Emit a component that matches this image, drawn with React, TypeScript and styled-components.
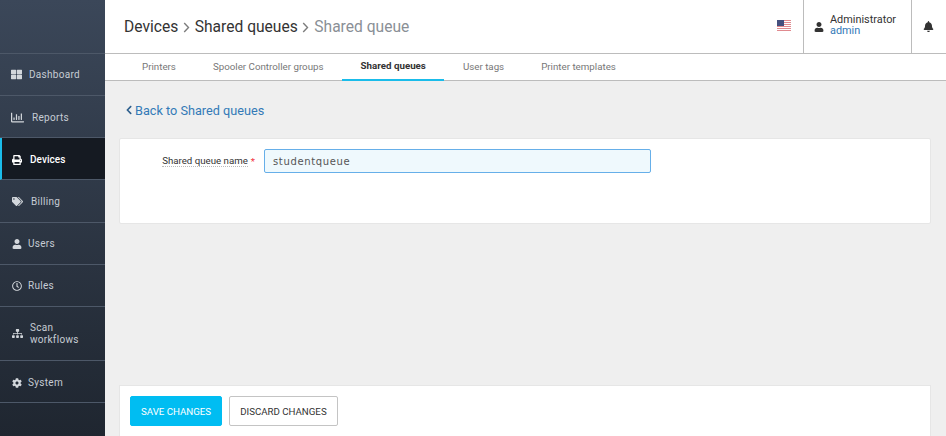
import React from 'react';
import styled, { createGlobalStyle } from 'styled-components';
import { FaThLarge, FaRegChartBar, FaPrint, FaTags, FaUser, FaRegClock, FaSitemap, FaCog, FaBell, FaChevronLeft } from 'react-icons/fa';

const Global = createGlobalStyle`
  html, body { margin: 0; padding: 0; height: 100%; overflow: hidden; }
  body { font-family: Roboto, "Liberation Sans", sans-serif; background: #efefef; }
  #root { height: 100%; }
  * { box-sizing: border-box; }
`;

const Page = styled.div`
  display: flex;
  width: 946px;
  height: 436px;
  overflow: hidden;
`;

const Sidebar = styled.nav`
  width: 105px;
  flex: none;
  display: flex;
  flex-direction: column;
  background: linear-gradient(180deg, #3b4759 0%, #1f2630 100%);
`;

const LogoArea = styled.div`
  height: 54px;
  flex: none;
  border-bottom: 1px solid #4d5868;
`;

const NavItem = styled.a<{ $active?: boolean; $h?: number; $gap: number; $pad: number; $nudge: number }>`
  display: flex;
  align-items: center;
  height: ${p => p.$h ?? 42}px;
  flex: none;
  padding-left: ${p => (p.$active ? p.$pad - 2 : p.$pad)}px;
  padding-top: ${p => p.$nudge}px;
  gap: ${p => p.$gap}px;
  border-bottom: 1px solid #4d5868;
  border-left: ${p => (p.$active ? '2px solid #1abcea' : 'none')};
  background: ${p => (p.$active ? '#151a22' : 'transparent')};
  color: ${p => (p.$active ? '#ffffff' : '#c6ccd4')};
  font-size: 10px;
  font-weight: ${p => (p.$active ? 500 : 400)};
  letter-spacing: ${p => (p.$active ? 0.05 : 0.3)}px;
  line-height: 12px;
  svg { flex: none; color: ${p => (p.$active ? '#ffffff' : '#d3d7dc')}; }
`;

const Main = styled.div`
  flex: 1;
  min-width: 0;
  display: flex;
  flex-direction: column;
`;

const Header = styled.header`
  height: 54px;
  flex: none;
  display: flex;
  align-items: stretch;
  justify-content: space-between;
  background: #fff;
  border-bottom: 1px solid #bcbcbc;
`;

const Crumbs = styled.div`
  display: flex;
  align-items: center;
  padding-left: 19px;
  font-size: 15.6px;
  color: #333;
`;

const Sep = styled.svg`
  width: 7px;
  height: 11px;
  margin: 2px 5px 0 4.5px;
  fill: none;
  stroke: #7d7d7d;
  stroke-width: 1.4;
`;

const Current = styled.span`
  color: #8a8f96;
`;

const HeaderRight = styled.div`
  display: flex;
  align-items: stretch;
`;

const FlagCell = styled.div`
  width: 43px;
  display: flex;
  align-items: center;
  padding-left: 17px;
  padding-bottom: 2px;
`;

const UserCell = styled.div`
  width: 109px;
  display: flex;
  align-items: center;
  gap: 6px;
  padding-left: 10px;
  border-left: 1px solid #bcbcbc;
  border-right: 1px solid #bcbcbc;
  color: #333;
  svg { color: #333; }
`;

const UserText = styled.div`
  font-size: 10.9px;
  line-height: 11px;
  margin-top: -3px;
`;

const UserRole = styled.div`
  color: #337ab7;
`;

const BellCell = styled.div`
  width: 34px;
  display: flex;
  align-items: center;
  padding-left: 11px;
  color: #333;
`;

const Tabs = styled.div`
  height: 27px;
  flex: none;
  display: flex;
  padding-left: 18.5px;
  background: #fff;
  border-bottom: 1px solid #bcbcbc;
`;

const Tab = styled.a<{ $active?: boolean }>`
  height: 27px;
  padding: 0 18.5px 2px;
  display: flex;
  align-items: center;
  font-size: 9.75px;
  white-space: nowrap;
  font-weight: ${p => (p.$active ? 700 : 400)};
  color: ${p => (p.$active ? '#333' : '#777')};
  border-bottom: ${p => (p.$active ? '2px solid #1abcea' : 'none')};
`;

const Body = styled.div`
  flex: 1;
  min-height: 0;
  display: flex;
  flex-direction: column;
  padding: 21px 15px 0 14px;
`;

const BackLink = styled.a`
  display: flex;
  align-items: center;
  gap: 1px;
  height: 16px;
  padding-left: 5px;
  font-size: 12.7px;
  color: #337ab7;
  svg { color: #2d5f8d; }
`;

const FormCard = styled.section`
  margin-top: 20px;
  height: 86px;
  flex: none;
  background: #fff;
  border: 1px solid #e6e6e6;
  border-radius: 2px;
  padding-top: 10px;
  display: flex;
  align-items: flex-start;
`;

const Label = styled.label`
  width: 135px;
  height: 24px;
  flex: none;
  display: flex;
  align-items: center;
  justify-content: flex-end;
  gap: 3px;
  margin-right: 9px;
  font-size: 9.7px;
  color: #333;
`;

const LabelText = styled.span`
  border-bottom: 1px dotted #bbb;
`;

const Required = styled.span`
  color: #f2333f;
`;

const NameInput = styled.input`
  width: 387px;
  height: 24px;
  padding: 0 8px;
  border: 1px solid #66afe9;
  border-radius: 2px;
  background: #eff9fd;
  outline: none;
  font-family: "DejaVu Sans", sans-serif;
  font-size: 10px;
  letter-spacing: 0.65px;
  color: #555;
`;

const Spacer = styled.div`
  flex: 1;
`;

const FooterCard = styled.section`
  height: 51px;
  flex: none;
  background: #fff;
  border: 1px solid #e6e6e6;
  border-bottom: none;
  padding: 10px;
  display: flex;
  gap: 7px;
  align-items: flex-start;
`;

const Button = styled.button<{ $primary?: boolean }>`
  height: 30px;
  padding: 0 10px;
  border-radius: 2px;
  font-family: Roboto, "Liberation Sans", sans-serif;
  font-size: 9.7px;
  font-weight: 400;
  white-space: nowrap;
  border: 1px solid ${p => (p.$primary ? '#00bdf2' : '#c4c4c4')};
  background: ${p => (p.$primary ? '#00bdf2' : '#fff')};
  color: ${p => (p.$primary ? '#fff' : '#333')};
`;

const Flag = () => (
  <svg width="14" height="11" viewBox="0 0 14 11">
    <rect width="14" height="11" fill="#fff" />
    {[0, 2, 4, 6, 8, 10].map(y => (
      <rect key={y} y={y} width="14" height="1" fill="#e08a8f" />
    ))}
    <rect width="7" height="6" fill="#44507e" />
  </svg>
);

const Chevron = () => (
  <Sep viewBox="0 0 7 11">
    <path d="M1.2 1 L5.5 5.5 L1.2 10" />
  </Sep>
);

const nav: { label: React.ReactNode; icon: React.ReactNode; gap: number; pad: number; nudge: number; h?: number; active?: boolean }[] = [
  { label: 'Dashboard', icon: <FaThLarge size={11} />, gap: 7, pad: 11, nudge: 0 },
  { label: 'Reports', icon: <FaRegChartBar size={13} />, gap: 8, pad: 11, nudge: 2 },
  { label: 'Devices', icon: <FaPrint size={10} />, gap: 8, pad: 12, nudge: 2, active: true },
  { label: 'Billing', icon: <FaTags size={11} />, gap: 8, pad: 12, nudge: 1, h: 43 },
  { label: 'Users', icon: <FaUser size={10} />, gap: 6, pad: 12, nudge: 0 },
  { label: 'Rules', icon: <FaRegClock size={10} />, gap: 6, pad: 12, nudge: 0 },
  { label: <>Scan<br />workflows</>, icon: <FaSitemap size={11} />, gap: 7, pad: 12, nudge: 0, h: 54 },
  { label: 'System', icon: <FaCog size={10} />, gap: 6, pad: 12, nudge: 2 },
];

const tabs = ['Printers', 'Spooler Controller groups', 'Shared queues', 'User tags', 'Printer templates'];

export default function App() {
  return (
    <Page>
      <Global />
      <Sidebar>
        <LogoArea />
        {nav.map((n, i) => (
          <NavItem key={i} $active={n.active} $h={n.h} $gap={n.gap} $pad={n.pad} $nudge={n.nudge}>
            {n.icon}
            <span>{n.label}</span>
          </NavItem>
        ))}
      </Sidebar>
      <Main>
        <Header>
          <Crumbs>
            <span>Devices</span>
            <Chevron />
            <span>Shared queues</span>
            <Chevron />
            <Current>Shared queue</Current>
          </Crumbs>
          <HeaderRight>
            <FlagCell><Flag /></FlagCell>
            <UserCell>
              <FaUser size={10} />
              <UserText>
                <div>Administrator</div>
                <UserRole>admin</UserRole>
              </UserText>
            </UserCell>
            <BellCell><FaBell size={11} /></BellCell>
          </HeaderRight>
        </Header>
        <Tabs>
          {tabs.map(t => (
            <Tab key={t} $active={t === 'Shared queues'}>{t}</Tab>
          ))}
        </Tabs>
        <Body>
          <BackLink><FaChevronLeft size={10} />Back to Shared queues</BackLink>
          <FormCard>
            <Label>
              <LabelText>Shared queue name</LabelText>
              <Required>*</Required>
            </Label>
            <NameInput defaultValue="studentqueue" />
          </FormCard>
          <Spacer />
          <FooterCard>
            <Button $primary>SAVE CHANGES</Button>
            <Button>DISCARD CHANGES</Button>
          </FooterCard>
        </Body>
      </Main>
    </Page>
  );
}
